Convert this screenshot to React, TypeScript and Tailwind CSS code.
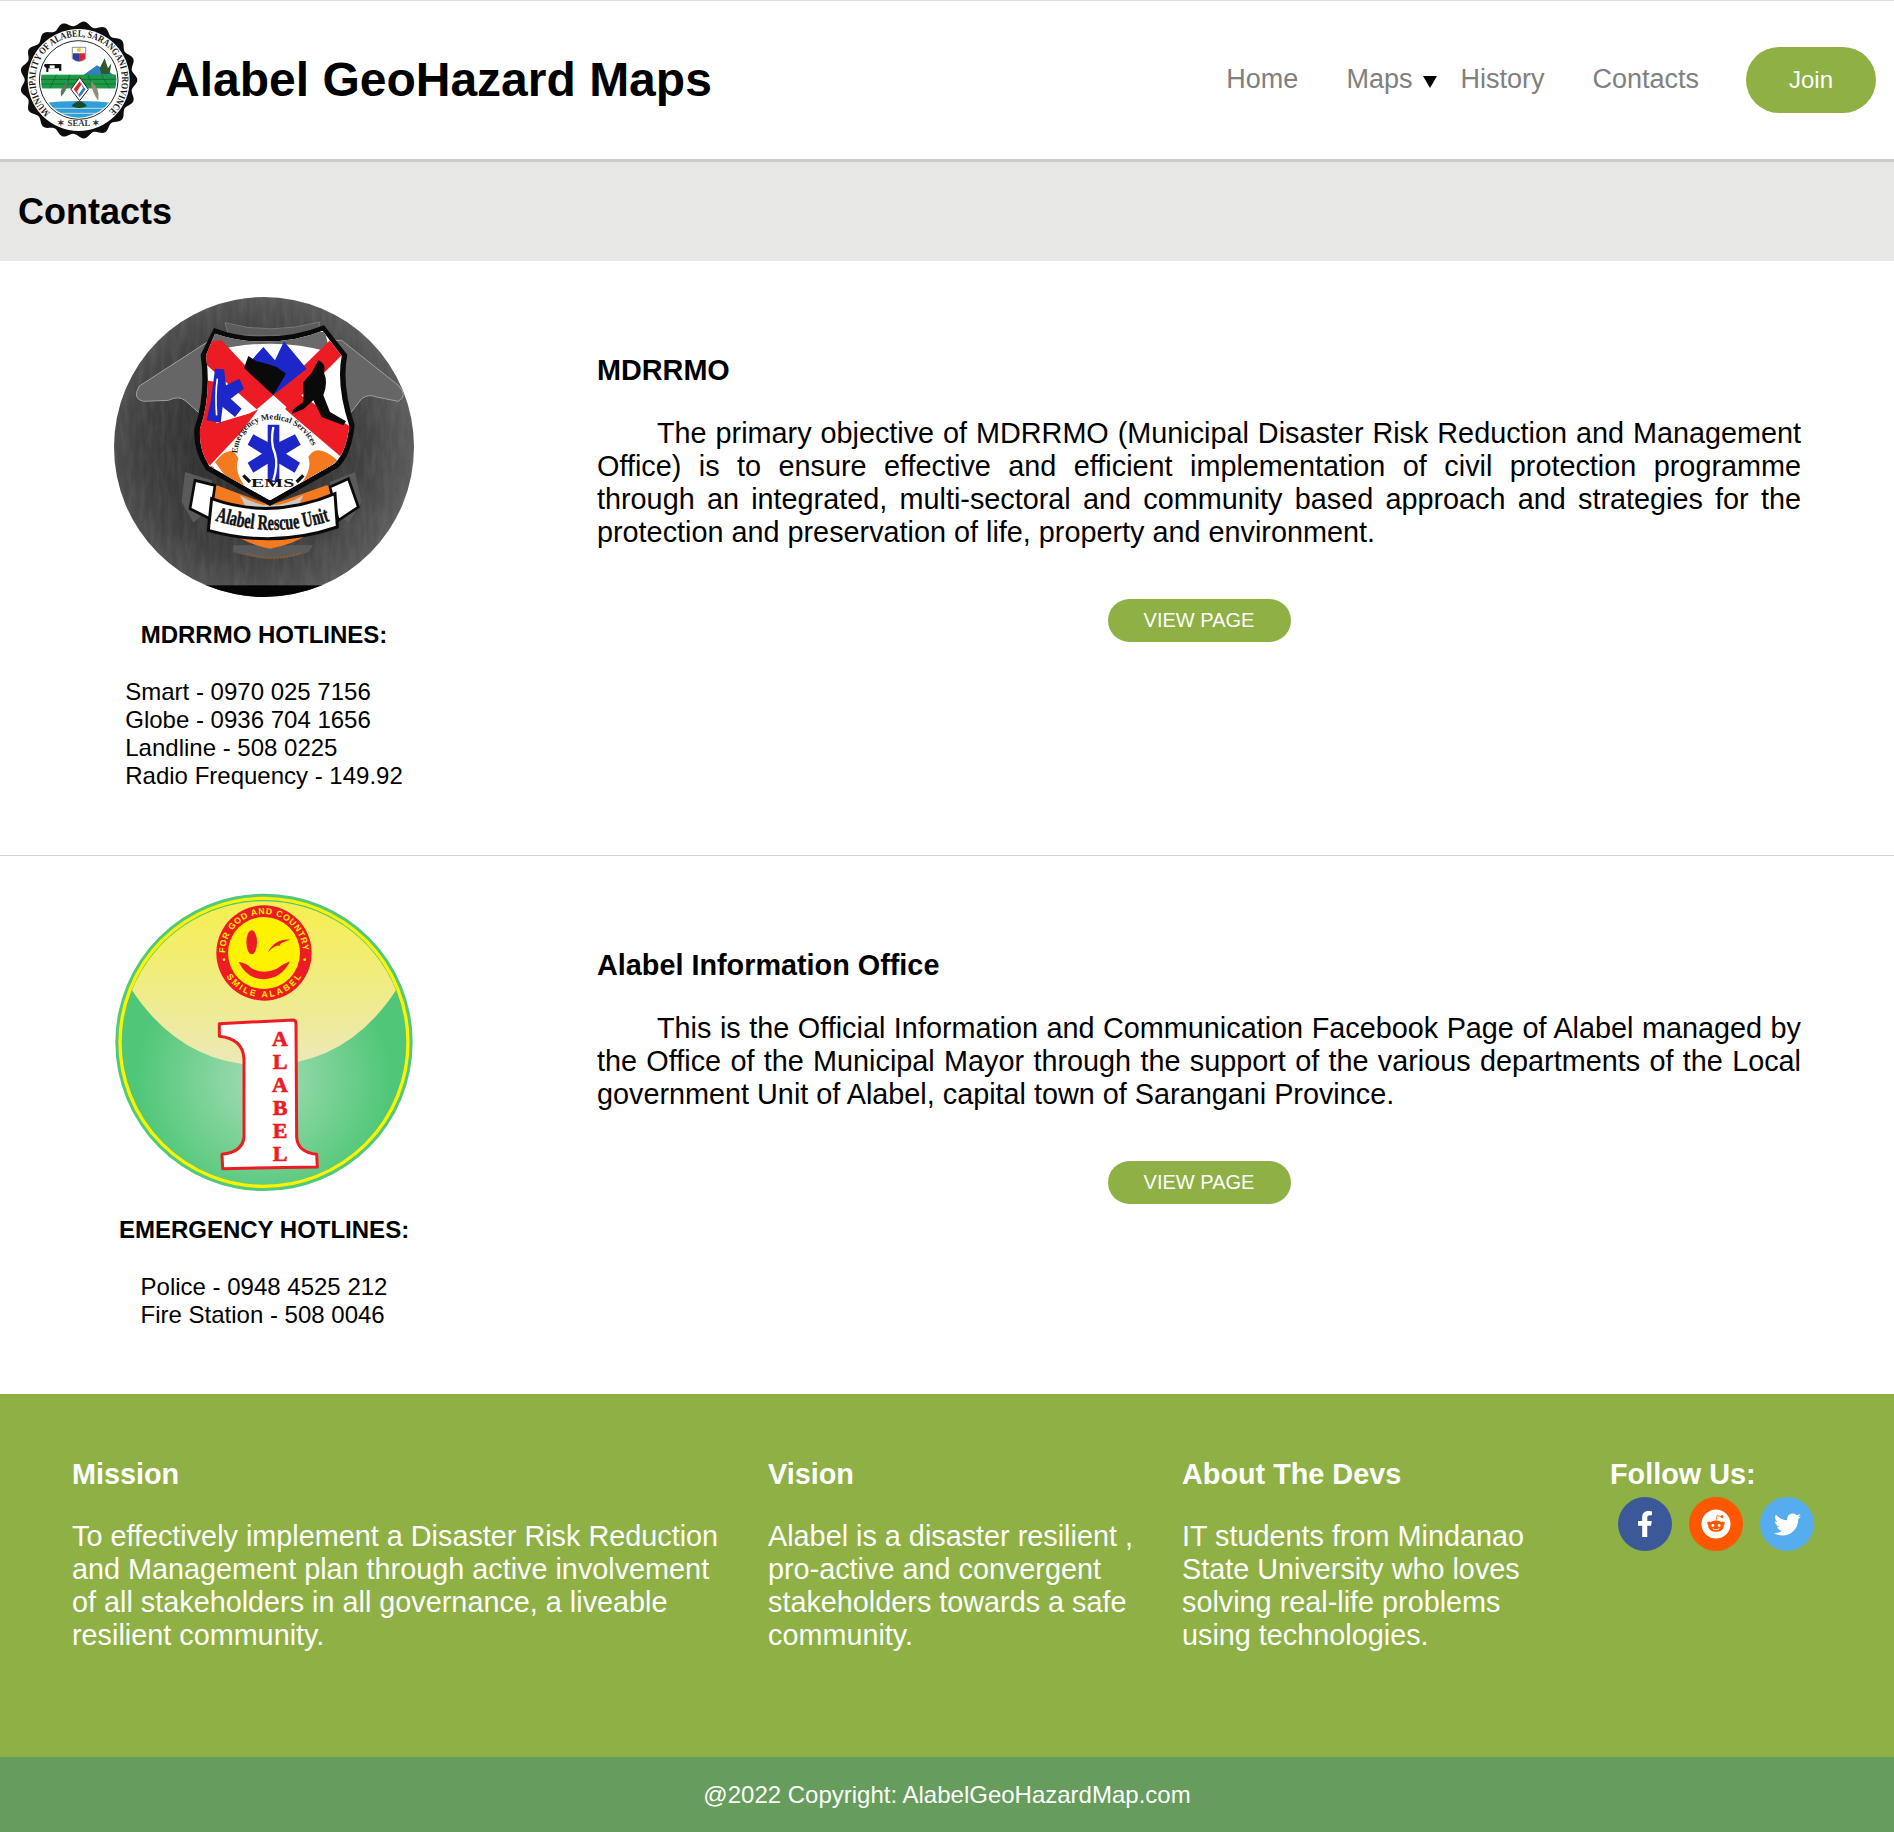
import { FaFacebookF, FaReddit, FaTwitter } from "react-icons/fa";

const GREEN = "bg-[#8fb045]";

function Seal() {
  // scalloped edge, smooth wave round the disc
  const edge = Array.from({ length: 240 }, (_, i) => {
    const a = (i / 240) * Math.PI * 2;
    const r = 169 + 7 * Math.cos(a * 17);
    return `${(237 + Math.cos(a) * r).toFixed(1)},${(240 + Math.sin(a) * r).toFixed(1)}`;
  }).join(" ");

  return (
    <svg viewBox="58 60 360 360" className="w-[120px] h-[120px] shrink-0">
      <defs>
        <path id="sealTop" d="M 152 338 A 130 130 0 1 1 322 338" />
        <clipPath id="sealInner">
          <circle cx="237" cy="240" r="113" />
        </clipPath>
      </defs>
      <polygon points={edge} fill="#0d0d0d" />
      <circle cx="237" cy="240" r="153" fill="#fff" />
      <text fontFamily="'Liberation Serif', serif" fontWeight="700" fontSize="29" fill="#1a1a1a">
        <textPath href="#sealTop" textLength="625" lengthAdjust="spacingAndGlyphs">
          MUNICIPALITY OF ALABEL, SARANGANI PROVINCE
        </textPath>
      </text>
      <text x="237" y="379" textAnchor="middle" fontFamily="'Liberation Serif', serif" fontWeight="700" fontSize="26" fill="#333">
        ✶ SEAL ✶
      </text>
      <circle cx="237" cy="240" r="118" fill="#fff" stroke="#222" strokeWidth="3" />
      <g clipPath="url(#sealInner)">
        <path d="M250 226 L292 196 L345 226 Z" fill="#2f80c0" />
        <path d="M300 205 L315 175 L325 205 L335 190 L330 222 L305 222 Z" fill="#2c5a2c" />
        <rect x="120" y="224" width="235" height="42" fill="#1e9a46" />
        <path d="M120 238 H355 M120 252 H355 M170 224 L150 266 M210 224 L200 266 M265 224 L280 266 M305 224 L330 266" stroke="#0c5e2a" strokeWidth="2" />
        <rect x="120" y="266" width="235" height="40" fill="#fff" />
        <path d="M120 310 Q 237 296 355 310 V 360 H 120 Z" fill="#2f9fd6" />
        <path d="M140 325 H 335 M165 340 H 310" stroke="#fff" strokeWidth="2" />
        <path d="M215 318 Q 240 290 262 318 Q 240 330 215 318 Z" fill="#1a4a2a" />
      </g>
      <path d="M218 142 H258 V176 Q 238 192 218 176 Z" fill="#fff" stroke="#555" strokeWidth="2" />
      <path d="M220 160 H238 V184 Q 226 182 220 176 Z" fill="#2b3f9e" />
      <path d="M238 160 H256 V176 Q 250 182 238 184 Z" fill="#d7262e" />
      <circle cx="238" cy="150" r="6" fill="#f2c81e" />
      <path d="M135 192 H185 V212 H178 V205 H146 V216 H140 V204 Q 130 200 135 192 Z" fill="#111" />
      <path d="M150 196 H165 V204 H150 Z" fill="#fff" />
      <path d="M240 232 L266 268 L240 302 L214 268 Z" fill="#fff" stroke="#222" strokeWidth="3" />
      <path d="M222 268 L240 244 L246 252 L232 274 L240 290 Z" fill="#d7262e" />
      <path d="M258 268 L240 292 L236 284 L250 264 L242 248 Z" fill="#2f80c0" />
      <path d="M205 245 Q 178 262 184 290 Q 200 275 205 245 Z" fill="#5a7a5a" />
      <path d="M272 244 Q 302 262 296 302 Q 278 280 272 244 Z" fill="#8d8d7a" />
    </svg>
  );
}

function RescueBadge() {
  return (
    <svg viewBox="42 35 900 900" className="w-[300px] h-[300px]">
      <defs>
        <radialGradient id="rescueBg" cx="45%" cy="50%" r="62%">
          <stop offset="0%" stopColor="#262626" />
          <stop offset="60%" stopColor="#404040" />
          <stop offset="100%" stopColor="#666" />
        </radialGradient>
        <filter id="rescueGrain">
          <feTurbulence type="fractalNoise" baseFrequency="0.06 0.012" numOctaves="3" seed="4" />
          <feColorMatrix values="0 0 0 0 1  0 0 0 0 1  0 0 0 0 1  0 0 0 0.6 -0.2" />
          <feComposite in2="SourceGraphic" operator="in" />
        </filter>
        <clipPath id="rescueDisc">
          <circle cx="492" cy="485" r="450" />
        </clipPath>
        <clipPath id="shieldClip">
          <path d="M345 145 Q 425 172 500 168 Q 590 168 668 136 L725 212 Q 708 300 748 422 Q 738 505 702 535 L 510 645 L 328 542 Q 295 490 300 430 Q 335 330 318 210 Z" />
        </clipPath>
        <path id="emsArc" d="M 412 505 Q 420 410 515 402 Q 615 408 645 505" />
        <path id="ribbonText" d="M 345 705 Q 520 762 695 705" />
      </defs>
      <circle cx="492" cy="485" r="450" fill="url(#rescueBg)" />
      <circle cx="492" cy="485" r="450" fill="#fff" filter="url(#rescueGrain)" opacity="0.22" />
      <rect x="42" y="900" width="900" height="40" fill="#050505" clipPath="url(#rescueDisc)" />

      {/* wings behind the shield */}
      <path d="M322 170 L118 302 Q 95 340 130 348 L 205 345 Q 235 330 255 345 L 300 385 L 750 385 L 785 340 Q 805 325 830 335 L 895 348 Q 925 330 895 300 L 725 165 Z" fill="#666" stroke="#a0a0a0" strokeWidth="3" />
      <path d="M375 112 Q 510 150 660 110 L 650 150 L 385 150 Z" fill="#5c5c5c" stroke="#8a8a8a" strokeWidth="2" />

      {/* orange ring and metal behind the ribbon */}
      <path d="M400 800 Q 520 840 625 800 L 640 780 L 400 780 Z" fill="#5a5a5a" />
      <path d="M440 805 Q 525 830 605 802" stroke="#8a5a30" strokeWidth="7" fill="none" strokeDasharray="6 4" />
      <path d="M318 610 Q 350 760 510 790 Q 680 760 715 610 L 680 600 L 510 660 L 350 600 Z" fill="#f47a20" />
      <path d="M420 630 Q 510 690 610 630 L 590 670 L 440 670 Z" fill="#c9c9c9" />

      {/* shield */}
      <path d="M342 128 Q 420 158 500 153 Q 590 153 672 120 L742 208 Q 724 300 764 420 Q 754 512 714 547 L 510 662 L 318 554 Q 278 495 283 430 Q 318 330 302 208 Z" fill="#0a0a0a" />
      <g clipPath="url(#shieldClip)">
        <rect x="280" y="120" width="490" height="540" fill="#fff" />
        <path d="M340 140 H 675 L 690 200 Q 510 150 330 200 Z" fill="#6a6a6a" />
        {/* red quadrant shapes */}
        <path d="M310 170 L 365 165 L 520 330 L 470 372 L 310 230 Z" fill="#ed1c24" />
        <path d="M690 165 L 725 210 L 565 370 L 520 330 Z" fill="#ed1c24" />
        <path d="M295 280 L 345 290 L 350 430 L 295 440 Z" fill="#ed1c24" />
        <path d="M295 430 L 445 385 L 475 372 L 340 550 L 290 500 Z" fill="#ed1c24" />
        <path d="M590 322 L 760 430 L 735 525 L 555 372 Z" fill="#ed1c24" />
        <path d="M445 235 L 490 185 L 525 225 L 552 168 L 620 250 L 520 330 Z" fill="#1d27c9" />
        <path d="M432 248 L 445 212 L 470 228 L 500 235 L 530 245 L 558 265 L 520 330 Z" fill="#0a0a0a" />
        {/* bottom quadrant */}
        <path d="M520 338 L 725 530 L 510 650 L 330 540 Z" fill="#fff" />
        <path d="M345 530 Q 395 470 415 520 Q 400 560 440 610 L 385 585 Z" fill="#f47a20" />
        <path d="M712 525 Q 650 470 625 515 Q 640 555 590 612 L 650 580 Z" fill="#f47a20" />
      </g>

      {/* star of life, left */}
      <path d="M345 250 L 372 252 L 378 300 L 418 280 L 432 310 L 392 340 L 425 370 L 405 395 L 368 365 L 362 412 L 320 405 L 333 345 Z" fill="#1d27c9" />
      <path d="M352 280 Q 345 330 350 390" stroke="#fff" strokeWidth="5" fill="none" />
      {/* diver */}
      <path d="M655 225 Q 680 235 672 262 Q 685 290 670 330 L 690 380 L 738 408 L 730 420 L 665 395 L 640 345 L 610 372 L 575 385 L 580 372 L 610 350 L 610 290 L 635 262 Z" fill="#0a0a0a" />
      {/* star of life, centre */}
      <path d="M503 418 H 538 V 470 L 585 447 L 602 478 L 558 505 L 600 532 L 584 562 L 538 535 V 590 H 503 V 535 L 460 562 L 443 532 L 486 505 L 443 478 L 460 447 L 503 470 Z" fill="#1d27c9" />
      <path d="M520 425 Q 510 470 525 505 Q 535 540 520 585" stroke="#fff" strokeWidth="7" fill="none" />
      <text fontFamily="'Liberation Serif', serif" fontWeight="700" fontSize="26" fill="#222">
        <textPath href="#emsArc" textLength="315" lengthAdjust="spacing">Emergency Medical Services</textPath>
      </text>
      <text x="518" y="605" textAnchor="middle" fontFamily="'Liberation Serif', serif" fontWeight="700" fontSize="38" fill="#111" textLength="130" lengthAdjust="spacingAndGlyphs">
        EMS
      </text>
      <path d="M430 570 L 450 590 M610 570 L 590 590" stroke="#111" strokeWidth="10" />

      {/* ribbon */}
      <path d="M255 560 L 335 585 L 340 660 L 280 712 L 245 650 Z" fill="#5a5a5a" />
      <path d="M765 560 L 690 590 L 690 670 L 745 712 L 785 650 Z" fill="#5a5a5a" />
      <path d="M285 585 L 345 600 L 330 700 L 270 670 Z" fill="#fff" stroke="#0a0a0a" strokeWidth="8" />
      <path d="M745 580 L 690 605 L 715 705 L 775 665 Z" fill="#fff" stroke="#0a0a0a" strokeWidth="8" />
      <path d="M335 640 Q 515 705 705 625 L 712 725 Q 520 790 325 735 Z" fill="#fff" stroke="#0a0a0a" strokeWidth="9" />
      <text fontFamily="'Liberation Serif', serif" fontWeight="700" fontSize="64" fill="#111" stroke="#111" strokeWidth="1.5">
        <textPath href="#ribbonText" textLength="350" lengthAdjust="spacingAndGlyphs">Alabel Rescue Unit</textPath>
      </text>
    </svg>
  );
}

function InfoBadge() {
  const letters = [
    { ch: "A", y: 498 },
    { ch: "L", y: 566 },
    { ch: "A", y: 636 },
    { ch: "B", y: 704 },
    { ch: "E", y: 772 },
    { ch: "L", y: 842 },
  ];

  return (
    <svg viewBox="42 35 900 900" className="w-[300px] h-[300px]">
      <defs>
        <radialGradient id="infoGreen" gradientUnits="userSpaceOnUse" cx="490" cy="600" r="380">
          <stop offset="0%" stopColor="#a7ddb6" />
          <stop offset="100%" stopColor="#50c778" />
        </radialGradient>
        <linearGradient id="infoCap" x1="0" y1="0" x2="0" y2="1">
          <stop offset="0%" stopColor="#f6ef4e" />
          <stop offset="100%" stopColor="#ebe9b8" />
        </linearGradient>
        <path id="smileTop" d="M 375 218 A 117 117 0 1 1 609 218" />
        <path id="smileBottom" d="M 375 280 A 132 132 0 0 0 609 280" />
      </defs>
      <circle cx="492" cy="486" r="446" fill="#4fc97a" />
      <circle cx="492" cy="486" r="432" fill="url(#infoGreen)" stroke="#fff200" strokeWidth="10" />
      <path d="M96 330 A 427 427 0 0 1 888 330 Q 740 555 492 555 Q 245 555 96 330 Z" fill="url(#infoCap)" />

      <circle cx="492" cy="218" r="143" fill="#ed1c24" />
      <circle cx="492" cy="218" r="108" fill="#fff200" />
      <text fontFamily="'Liberation Sans', sans-serif" fontWeight="700" fontSize="26" fill="#fff200">
        <textPath href="#smileTop" textLength="360" lengthAdjust="spacing">FOR GOD AND COUNTRY</textPath>
      </text>
      <text fontFamily="'Liberation Sans', sans-serif" fontWeight="700" fontSize="26" fill="#fff200">
        <textPath href="#smileBottom" startOffset="3%" textLength="268" lengthAdjust="spacing">SMILE ALABEL</textPath>
      </text>
      <circle cx="372" cy="238" r="4" fill="#fff200" />
      <circle cx="614" cy="238" r="4" fill="#fff200" />
      <ellipse cx="455" cy="186" rx="16" ry="36" fill="#ed1c24" />
      <path d="M503 217 Q 525 175 570 178 Q 535 188 540 196 Q 525 192 503 217 Z" fill="#ed1c24" />
      <path d="M416 245 Q 440 248 452 262 Q 490 285 530 265 Q 550 250 570 243 Q 545 295 490 297 Q 440 295 416 245 Z" fill="#ed1c24" />

      <path
        d="M358 430 L 580 419 Q 588 420 588 430 L 590 770 Q 592 815 650 822 L 652 860 L 368 865 L 366 822 Q 428 815 432 770 L 432 535 Q 428 475 358 468 Z"
        fill="#fff"
        stroke="#ed1c24"
        strokeWidth="9"
        strokeLinejoin="round"
      />
      {letters.map((l, i) => (
        <text key={i} x="540" y={l.y} textAnchor="middle" fontFamily="'Liberation Serif', serif" fontWeight="700" fontSize="66" fill="#ed1c24" stroke="#ed1c24" strokeWidth="2">
          {l.ch}
        </text>
      ))}
    </svg>
  );
}

function ContactRow({ badge, hotlineTitle, hotlines, title, body }: { badge: React.ReactNode; hotlineTitle: string; hotlines: string[]; title: string; body: string }) {
  return (
    <section className="flex pt-9 pb-[65px]">
      <div className="w-[528px] shrink-0 flex flex-col items-center">
        {badge}
        <h4 className="mt-[22px] text-2xl font-bold">{hotlineTitle}</h4>
        <div className="mt-[27px] text-2xl leading-[28px]">
          {hotlines.map((line) => (
            <p key={line}>{line}</p>
          ))}
        </div>
      </div>
      <div className="flex-1 ml-[69px] mr-[93px] pt-[57px]">
        <h3 className="text-[28.8px] font-bold">{title}</h3>
        <p className="mt-[30px] text-[28.8px] text-justify indent-[60px]">{body}</p>
        <div className="mt-[50px] flex justify-center">
          <button className={`w-[183px] h-[43px] pb-0.5 rounded-full ${GREEN} text-white text-xl`}>VIEW PAGE</button>
        </div>
      </div>
    </section>
  );
}

const footerCols = [
  {
    title: "Mission",
    text: "To effectively implement a Disaster Risk Reduction and Management plan through active involvement of all stakeholders in all governance, a liveable resilient community.",
  },
  {
    title: "Vision",
    text: "Alabel is a disaster resilient , pro-active and convergent stakeholders towards a safe community.",
  },
  {
    title: "About The Devs",
    text: "IT students from Mindanao State University who loves solving real-life problems using technologies.",
  },
];

export default function App() {
  return (
    <div className="font-['Liberation_Sans',Arial,sans-serif] leading-[normal] text-black bg-white">
      {/* Navbar */}
      <header className="h-[162px] border-t border-t-[#ddd] border-b-[3px] border-b-[#ccc] flex items-center pl-[19px] pr-[18px]">
        <Seal />
        <h1 className="ml-[26px] mb-[2px] text-[48px] font-bold">Alabel GeoHazard Maps</h1>
        <nav className="ml-auto flex items-center text-[27px] text-[#808080]">
          <a className="mb-[2px]">Home</a>
          <a className="ml-[48px] mb-[2px]">Maps</a>
          <svg viewBox="0 0 14 12" className="ml-[11px] mt-1 w-[14px] h-[12px]">
            <path d="M0 0 H14 L7 12 Z" fill="#000" />
          </svg>
          <a className="ml-[23px] mb-[2px]">History</a>
          <a className="ml-[48px] mb-[2px]">Contacts</a>
          <button className={`ml-[47px] w-[130px] h-[66px] rounded-full ${GREEN} text-white text-2xl`}>Join</button>
        </nav>
      </header>

      <div className="h-[99px] bg-[#e7e7e6] flex items-center pl-[18px]">
        <h2 className="text-[36px] font-bold">Contacts</h2>
      </div>

      <ContactRow
        badge={<RescueBadge />}
        hotlineTitle="MDRRMO HOTLINES:"
        hotlines={["Smart - 0970 025 7156", "Globe - 0936 704 1656", "Landline - 508 0225", "Radio Frequency - 149.92"]}
        title="MDRRMO"
        body="The primary objective of MDRRMO (Municipal Disaster Risk Reduction and Management Office) is to ensure effective and efficient implementation of civil protection programme through an integrated, multi-sectoral and community based approach and strategies for the protection and preservation of life, property and environment."
      />
      <div className="h-px bg-[#d4d4d4]" />
      <ContactRow
        badge={<InfoBadge />}
        hotlineTitle="EMERGENCY HOTLINES:"
        hotlines={["Police - 0948 4525 212", "Fire Station - 508 0046"]}
        title="Alabel Information Office"
        body="This is the Official Information and Communication Facebook Page of Alabel managed by the Office of the Municipal Mayor through the support of the various departments of the Local government Unit of Alabel, capital town of Sarangani Province."
      />

      {/* Footer */}
      <footer className={`h-[363px] ${GREEN} text-white pt-[64px] pl-[72px] grid grid-cols-[696px_414px_428px_1fr]`}>
        {footerCols.map((col) => (
          <div key={col.title} className="pr-10">
            <h4 className="text-[28.8px] font-bold">{col.title}</h4>
            <p className="mt-[29px] text-[28.8px]">{col.text}</p>
          </div>
        ))}
        <div>
          <h4 className="text-[28.8px] font-bold">Follow Us:</h4>
          <div className="mt-[6px] ml-2 flex gap-[17px]">
            <span className="w-[54px] h-[54px] rounded-full bg-[#3b5998] flex items-center justify-center">
              <FaFacebookF size={26} />
            </span>
            <span className="w-[54px] h-[54px] rounded-full bg-[#ff5700] flex items-center justify-center">
              <FaReddit size={30} />
            </span>
            <span className="w-[54px] h-[54px] rounded-full bg-[#55acee] flex items-center justify-center">
              <FaTwitter size={27} />
            </span>
          </div>
        </div>
      </footer>
      <div className="h-[75px] bg-[#669c5c] text-white text-2xl flex items-center justify-center">
        @2022 Copyright: AlabelGeoHazardMap.com
      </div>
    </div>
  );
}
